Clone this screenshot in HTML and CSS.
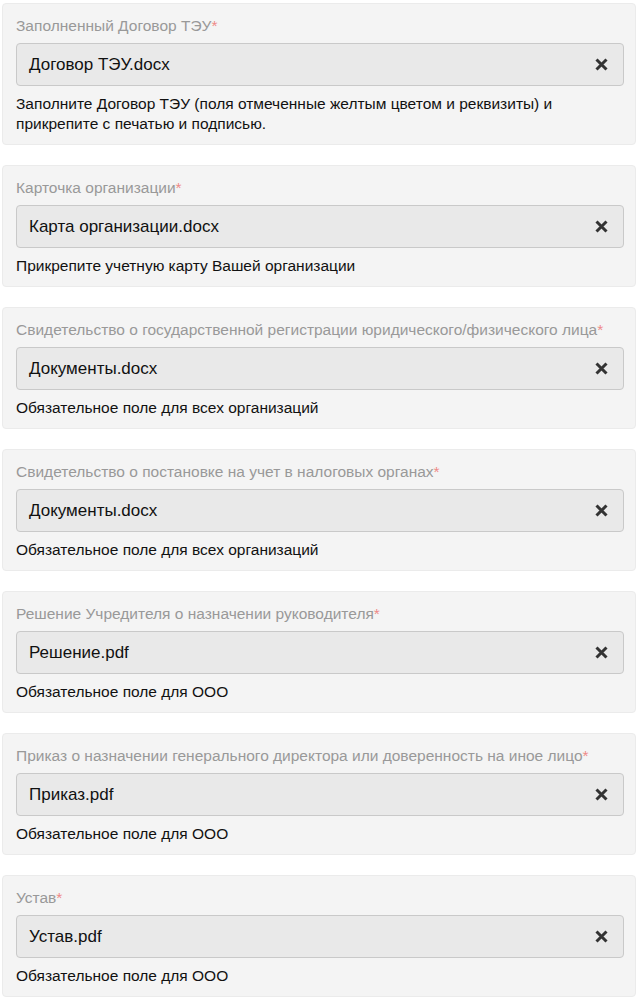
FILE: index.html
```html
<!DOCTYPE html>
<html lang="ru">
<head>
    <meta charset="UTF-8">
    <title>Документы</title>
    <link rel="stylesheet" href="styles.css">
</head>
<body>
    <div class="doc-list">
        <div class="doc-card">
            <div class="doc-label">Заполненный Договор ТЭУ<span class="req">*</span></div>
            <div class="doc-file"><span class="file-name">Договор ТЭУ.docx</span><span class="file-remove"><svg width="13" height="13" viewBox="0 0 13 13"><path d="M1.5 1.5L11.5 11.5M11.5 1.5L1.5 11.5"/></svg></span></div>
            <div class="doc-note">Заполните Договор ТЭУ (поля отмеченные желтым цветом и реквизиты) и прикрепите с печатью и подписью.</div>
        </div>
        <div class="doc-card">
            <div class="doc-label">Карточка организации<span class="req">*</span></div>
            <div class="doc-file"><span class="file-name">Карта организации.docx</span><span class="file-remove"><svg width="13" height="13" viewBox="0 0 13 13"><path d="M1.5 1.5L11.5 11.5M11.5 1.5L1.5 11.5"/></svg></span></div>
            <div class="doc-note">Прикрепите учетную карту Вашей организации</div>
        </div>
        <div class="doc-card">
            <div class="doc-label">Свидетельство о государственной регистрации юридического/физического лица<span class="req">*</span></div>
            <div class="doc-file"><span class="file-name">Документы.docx</span><span class="file-remove"><svg width="13" height="13" viewBox="0 0 13 13"><path d="M1.5 1.5L11.5 11.5M11.5 1.5L1.5 11.5"/></svg></span></div>
            <div class="doc-note">Обязательное поле для всех организаций</div>
        </div>
        <div class="doc-card">
            <div class="doc-label">Свидетельство о постановке на учет в налоговых органах<span class="req">*</span></div>
            <div class="doc-file"><span class="file-name">Документы.docx</span><span class="file-remove"><svg width="13" height="13" viewBox="0 0 13 13"><path d="M1.5 1.5L11.5 11.5M11.5 1.5L1.5 11.5"/></svg></span></div>
            <div class="doc-note">Обязательное поле для всех организаций</div>
        </div>
        <div class="doc-card">
            <div class="doc-label">Решение Учредителя о назначении руководителя<span class="req">*</span></div>
            <div class="doc-file"><span class="file-name">Решение.pdf</span><span class="file-remove"><svg width="13" height="13" viewBox="0 0 13 13"><path d="M1.5 1.5L11.5 11.5M11.5 1.5L1.5 11.5"/></svg></span></div>
            <div class="doc-note">Обязательное поле для ООО</div>
        </div>
        <div class="doc-card">
            <div class="doc-label">Приказ о назначении генерального директора или доверенность на иное лицо<span class="req">*</span></div>
            <div class="doc-file"><span class="file-name">Приказ.pdf</span><span class="file-remove"><svg width="13" height="13" viewBox="0 0 13 13"><path d="M1.5 1.5L11.5 11.5M11.5 1.5L1.5 11.5"/></svg></span></div>
            <div class="doc-note">Обязательное поле для ООО</div>
        </div>
        <div class="doc-card">
            <div class="doc-label">Устав<span class="req">*</span></div>
            <div class="doc-file"><span class="file-name">Устав.pdf</span><span class="file-remove"><svg width="13" height="13" viewBox="0 0 13 13"><path d="M1.5 1.5L11.5 11.5M11.5 1.5L1.5 11.5"/></svg></span></div>
            <div class="doc-note">Обязательное поле для ООО</div>
        </div>
    </div>
</body>
</html>
```

FILE: styles.css
```css
body {
    font-family: 'Liberation Sans', Arial, sans-serif;
    background-color: #fff;
    margin: 0;
    padding: 3px 2px;
    color: #222;
}

.doc-list {
    display: flex;
    flex-direction: column;
    gap: 20px;
}

.doc-card {
    background-color: #f4f4f4;
    border: 1px solid #ebebeb;
    border-radius: 4px;
    padding: 12px 11px 10px 13px;
}

.doc-label {
    font-size: 15.5px;
    line-height: 20px;
    color: #999;
    margin-bottom: 7px;
}

    .doc-label .req {
        color: #ef8a88;
    }

.doc-file {
    display: flex;
    align-items: center;
    justify-content: space-between;
    height: 43px;
    box-sizing: border-box;
    background-color: #e9e9e9;
    border: 1px solid #c9c9c9;
    border-radius: 4px;
    padding: 0 15px 0 12px;
}

.file-name {
    font-size: 17px;
    color: #111;
}

.file-remove svg {
    display: block;
    stroke: #333;
    stroke-width: 3;
    fill: none;
}

.doc-note {
    font-size: 15.5px;
    line-height: 20px;
    color: #111;
    margin-top: 8px;
    padding-right: 60px;
}
```
